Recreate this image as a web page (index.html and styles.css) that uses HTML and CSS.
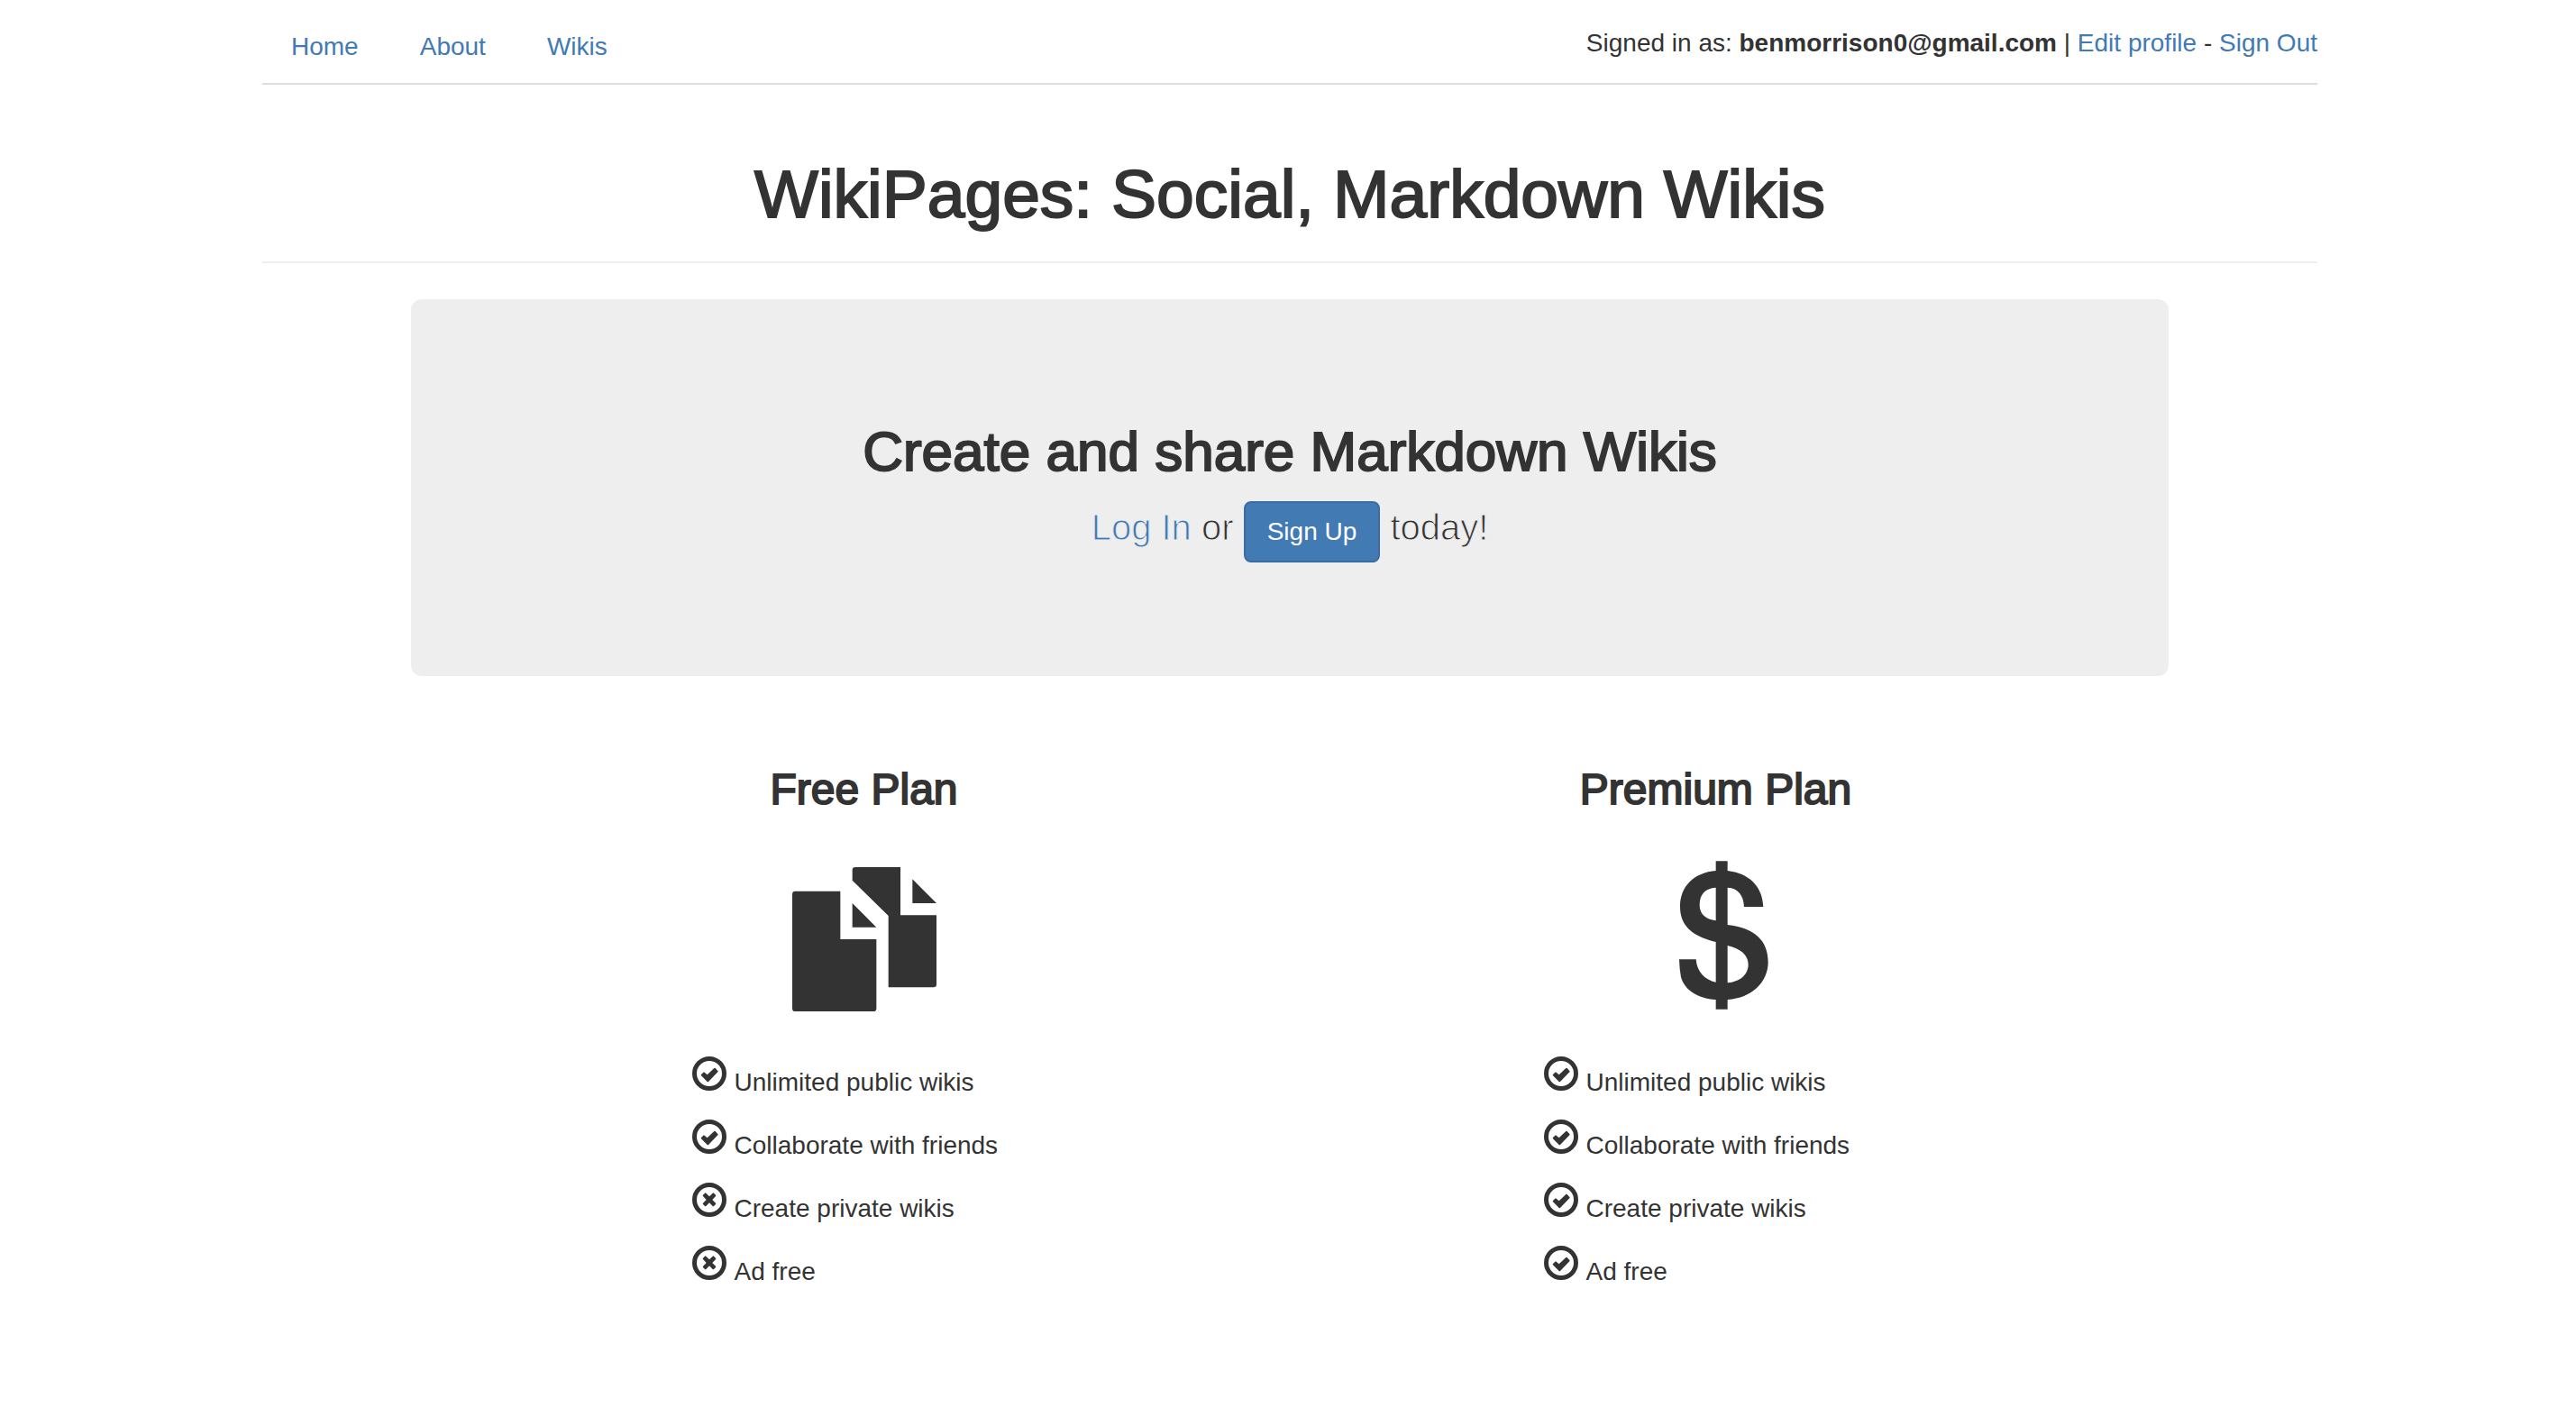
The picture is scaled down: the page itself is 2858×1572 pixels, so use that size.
FILE: index.html
```html
<!DOCTYPE html>
<html lang="en">
<head>
<meta charset="utf-8">
<meta name="viewport" content="width=device-width, initial-scale=1">
<title>WikiPages</title>
<link rel="stylesheet" href="styles.css">
</head>
<body>
<svg class="sprite" aria-hidden="true">
  <symbol id="icon-check" viewBox="0 0 114 114">
    <circle cx="57" cy="57" r="49.5" fill="none" stroke="currentColor" stroke-width="15"/>
    <path fill="currentColor" d="M30 64q-2-2 0-4l7-7q2-2 4 0l9 8 23-22q2-2 4 0l8 9q2 2 0 4L54 84q-2 2-4 0z"/>
  </symbol>
  <symbol id="icon-cross" viewBox="0 0 114 114">
    <circle cx="57" cy="57" r="49.5" fill="none" stroke="currentColor" stroke-width="15"/>
    <path fill="currentColor" d="M42 35q2-2 4 0l11 11 11-11q2-2 4 0l6 6q2 2 0 4L67 57l11 11q2 2 0 4l-6 6q-2 2-4 0L57 67 46 78q-2 2-4 0l-6-6q-2-2 0-4l11-11-11-12q-2-2 0-4z"/>
  </symbol>
</svg>
<div class="container">
  <header class="header">
    <nav class="nav">
      <a class="nav-link" href="#">Home</a>
      <a class="nav-link" href="#">About</a>
      <a class="nav-link" href="#">Wikis</a>
    </nav>
    <div class="user-info">Signed in as: <strong>benmorrison0@gmail.com</strong> | <a href="#">Edit profile</a> - <a href="#">Sign Out</a></div>
  </header>
  <div class="page-header">
    <h1 class="page-title">WikiPages: Social, Markdown Wikis</h1>
  </div>
  <main>
    <section class="jumbotron">
      <h2 class="jumbotron-title">Create and share Markdown Wikis</h2>
      <p class="lead"><a href="#">Log In</a> or <button class="btn" type="button">Sign Up</button> today!</p>
    </section>
    <div class="plans">
      <section class="plan">
        <h3 class="plan-title">Free Plan</h3>
        <svg class="plan-icon" viewBox="0 0 480 480" aria-hidden="true">
          <path fill="currentColor" d="M10 80H160V240H280V470q0 10-10 10H10q-10 0-10-10V90q0-10 10-10zM200 120l80 80h-80zM210 0H360V160H480V390q0 10-10 10H320V162L200 44V10q0-10 10-10zM400 40l80 80h-80z"/>
        </svg>
        <ul class="features">
          <li class="feature"><svg class="feature-icon"><use href="#icon-check"/></svg>Unlimited public wikis</li>
          <li class="feature"><svg class="feature-icon"><use href="#icon-check"/></svg>Collaborate with friends</li>
          <li class="feature"><svg class="feature-icon"><use href="#icon-cross"/></svg>Create private wikis</li>
          <li class="feature"><svg class="feature-icon"><use href="#icon-cross"/></svg>Ad free</li>
        </ul>
      </section>
      <section class="plan">
        <h3 class="plan-title">Premium Plan</h3>
        <svg class="plan-icon" viewBox="312 396 480 480" aria-hidden="true">
          <path fill="currentColor" fill-rule="evenodd" d="M551 376H590V408C660 416 706 458 709 528H645C643 490 626 466 590 464V588C680 598 725 640 725 712C725 780 670 832 590 837V869H551V837C490 834 446 803 435 762Q430 735 429 703H485C488 745 515 772 551 779V645C470 625 432 590 432 527C432 460 478 414 551 408zM551 464C515 466 497 487 497 521C497 551 516 569 551 574zM590 657V781C630 778 659 755 659 720C659 688 634 668 590 657z"/>
        </svg>
        <ul class="features">
          <li class="feature"><svg class="feature-icon"><use href="#icon-check"/></svg>Unlimited public wikis</li>
          <li class="feature"><svg class="feature-icon"><use href="#icon-check"/></svg>Collaborate with friends</li>
          <li class="feature"><svg class="feature-icon"><use href="#icon-check"/></svg>Create private wikis</li>
          <li class="feature"><svg class="feature-icon"><use href="#icon-check"/></svg>Ad free</li>
        </ul>
      </section>
    </div>
  </main>
</div>
</body>
</html>
```
FILE: styles.css
```css
* {
  box-sizing: border-box;
}

body {
  margin: 0;
  padding-left: 4px;
  background: #fff;
  color: #333;
  font: 28px/40px "Liberation Sans", Arial, sans-serif;
}

a {
  color: #427ab3;
  text-decoration: none;
}

h1,
h2,
h3,
p,
ul {
  margin: 0;
}

h1,
h2,
h3 {
  font-weight: 400;
  -webkit-text-stroke: 2px currentColor;
}

.sprite {
  display: none;
}

.container {
  max-width: 2340px;
  margin: 0 auto;
  padding: 0 30px;
}

.header {
  display: flex;
  justify-content: space-between;
  align-items: flex-start;
  border-bottom: 2px solid #ddd;
}

.nav {
  display: flex;
  gap: 8px;
  padding: 12px 0 0 2px;
}

.nav-link {
  padding: 20px 30px;
}

.user-info {
  padding-top: 28px;
}

.page-header {
  padding: 82px 0 36px;
  border-bottom: 2px solid #eee;
}

.page-title {
  font-size: 75px;
  line-height: 78px;
  text-align: center;
}

.jumbotron {
  max-width: 1950px;
  margin: 40px auto 0;
  padding: 136px 60px 126px;
  border-radius: 12px;
  background: #eee;
  text-align: center;
}

.jumbotron-title {
  font-size: 62px;
  line-height: 66px;
}

.lead {
  margin-top: 21px;
  font-size: 40px;
  line-height: 60px;
  -webkit-text-stroke: 1px #eee;
}

.btn {
  padding: 12px 24px;
  border: 2px solid #3b6da3;
  border-radius: 8px;
  background: #427ab3;
  color: #fff;
  font: inherit;
  font-size: 28px;
  line-height: 40px;
  -webkit-text-stroke: 0;
}

.plans {
  display: grid;
  grid-template-columns: 1fr 1fr;
  max-width: 1890px;
  margin: 100px auto 0;
}

.plan {
  display: flex;
  flex-direction: column;
  align-items: center;
}

.plan-title {
  font-size: 48px;
  line-height: 52px;
}

.plan-icon {
  width: 160px;
  height: 160px;
  margin-top: 60px;
  overflow: visible;
}

.features {
  width: 382px;
  margin-top: 50px;
  padding: 0;
  list-style: none;
}

.feature {
  display: flex;
  align-items: baseline;
  gap: 9px;
  height: 70px;
}

.feature-icon {
  flex: none;
  width: 38px;
  height: 38px;
}
```
